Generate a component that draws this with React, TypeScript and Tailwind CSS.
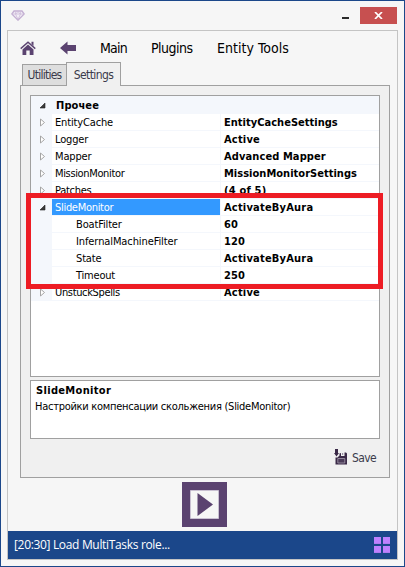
import React from 'react';

const rows = [
  { name: 'EntityCache', value: 'EntityCacheSettings', nt: 'tracking-[-0.15px]', vt: 'tracking-[0.02px]' },
  { name: 'Logger', value: 'Active', nt: 'tracking-[-0.15px]', vt: 'tracking-[0.2px]' },
  { name: 'Mapper', value: 'Advanced Mapper', nt: 'tracking-[-0.15px]', vt: 'tracking-[0.1px]' },
  { name: 'MissionMonitor', value: 'MissionMonitorSettings', nt: 'tracking-[-0.35px]', vt: 'tracking-[0.02px]' },
  { name: 'Patches', value: '(4 of 5)', nt: 'tracking-[-0.3px]', vt: 'tracking-[0.2px]' },
  { name: 'SlideMonitor', value: 'ActivateByAura', selected: true, nt: 'tracking-[-0.3px]', vt: 'tracking-[0.2px]' },
  { name: 'BoatFilter', value: '60', child: true, nt: 'tracking-[-0.15px]', vt: 'tracking-[0.2px]' },
  { name: 'InfernalMachineFilter', value: '120', child: true, nt: 'tracking-[-0.1px]', vt: 'tracking-[0.1px]' },
  { name: 'State', value: 'ActivateByAura', child: true, nt: 'tracking-[-0.15px]', vt: 'tracking-[0.2px]' },
  { name: 'Timeout', value: '250', child: true, nt: 'tracking-[-0.2px]', vt: 'tracking-[0.1px]' },
  { name: 'UnstuckSpells', value: 'Active', nt: 'tracking-[-0.35px]', vt: 'tracking-[0.2px]' },
];

function Expander({ open }: { open?: boolean }) {
  return (
    <svg className="ml-[8px] block" width="7" height="9" viewBox="0 0 7 9">
      {open ? (
        <path d="M6 2V7H1Z" fill="#3b3b3b" stroke="#222" strokeWidth=".6" />
      ) : (
        <path d="M1.5 1V8L5.5 4.5Z" fill="#fff" stroke="#a5a5a5" strokeWidth="1" />
      )}
    </svg>
  );
}

function TitleBar() {
  return (
    <div className="flex h-[29px] shrink-0 items-start pl-[10px] pr-[7px]">
      <svg className="mt-[9px]" width="14" height="11" viewBox="0 0 14 11">
        <path d="M3 1H11L13.2 4 7 10.2.8 4Z" fill="#f4eff7" stroke="#c3afd2" strokeWidth="1.3" />
        <path d="M1 4H13M4.5 4 7 9.5 9.5 4M4 1.2 4.8 4 7 1.5 9.2 4 10 1.2" fill="none" stroke="#cbbad8" strokeWidth=".8" />
      </svg>
      <div className="ml-auto mr-[11px] mt-[16px] h-[2px] w-[7px] bg-[#2b2b2b]" />
      <div className="mt-[6px] flex h-[17px] w-[37px] items-center justify-center bg-[#c75050]">
        <svg width="9" height="7" viewBox="0 0 9 7">
          <path d="M1 0 8 7M8 0 1 7" stroke="#fff" strokeWidth="1.7" />
        </svg>
      </div>
    </div>
  );
}

function MenuBar() {
  return (
    <div className="flex h-[33px] items-center text-[14px] text-black">
      <svg className="ml-[12px]" width="16" height="14" viewBox="0 0 16 14">
        <path d="M8 3.6 13.5 8.5V14H9.7V9.5H6.3V14H2.5V8.5Z" fill="#5b4370" />
        <path d="M.7 7.6 8 1.2 15.3 7.6" fill="none" stroke="#5b4370" strokeWidth="1.4" />
        <path d="M11.5 .8H13.5V5L11.5 3Z" fill="#5b4370" />
      </svg>
      <svg className="ml-[24px]" width="16" height="14" viewBox="0 0 16 14">
        <path d="M0 7 7.5 .5V4H16V10H7.5V13.5Z" fill="#5b4370" />
      </svg>
      <span className="ml-[24px] w-[51px] whitespace-nowrap pt-[2px] tracking-[-0.8px]">Main</span>
      <span className="w-[66px] whitespace-nowrap pt-[2px] tracking-[-0.5px]">Plugins</span>
      <span className="whitespace-nowrap pt-[2px] tracking-[0.02px]">Entity Tools</span>
    </div>
  );
}

function PropertyGrid() {
  return (
    <div className="h-[282px] border border-[#a0a0a0] bg-white text-[11px] leading-[17px] text-black">
      <div className="flex h-[18px] items-center bg-[#f4f7fc]">
        <div className="w-[21px]"><Expander open /></div>
        <span className="ml-[4px] font-bold tracking-[0.1px]">Прочее</span>
      </div>
      {rows.map((r) => (
        <div key={r.name} className="flex h-[17px] whitespace-nowrap">
          <div className="flex w-[21px] shrink-0 items-center bg-[#f4f7fc]">
            {!r.child && <Expander open={r.selected} />}
          </div>
          <div
            className={
              'w-[168px] shrink-0 border-b border-[#f4f7fc] ' +
              (r.child ? 'pl-[24px] ' : 'pl-[3px] ') +
              (r.selected ? 'bg-[#3399ff] text-white ' : '') + r.nt
            }
          >
            {r.name}
          </div>
          <div className={'grow border-b border-l border-[#f4f7fc] pl-[3px] font-bold ' + r.vt}>{r.value}</div>
        </div>
      ))}
    </div>
  );
}

function SaveButton() {
  return (
    <div className="flex h-[18px] items-center self-end pr-[4px] text-[#3b3b4b]">
      <svg width="14" height="16" viewBox="0 0 14 16">
        <path d="M1 0H4V4H5L2.5 7.5 0 4H1Z" fill="#3a2947" />
        <path d="M1.5 8.5H3.5L5.5 6.5V4.5L7 4V7H10.5V3.5H12L13 4.5V15.5H1.5Z" fill="#3a2947" />
        <path d="M8 4H9.2V6H8Z" fill="#9b91a5" />
        <path d="M3.8 14V9.5H10.8V14Z" fill="#4b3b58" stroke="#a79eaf" strokeWidth=".8" />
      </svg>
      <span className="ml-[4px] pt-[2px] text-[12px] tracking-[-0.6px]">Save</span>
    </div>
  );
}

export default function App() {
  return (
    <div className="relative flex h-[567px] w-[405px] flex-col overflow-hidden border border-[#1b478a] bg-[#f6f6f6] font-['DejaVu_Sans_Condensed','DejaVu_Sans',sans-serif] [font-stretch:condensed]">
      <TitleBar />
      <div className="ml-[6px] flex h-[530px] w-[391px] flex-col border border-[#c4c4c4]">
        <MenuBar />
        <div className="flex h-[21px] shrink-0 items-end pl-[14px] text-[12px] text-[#3b3b4b]">
          <div className="flex h-[21px] w-[44px] items-center justify-center border border-b-0 border-r-0 border-[#a0a0a0] bg-[#dedede] tracking-[-0.75px]">Utilities</div>
          <div className="relative z-10 -mb-px flex h-[24px] w-[55px] items-center justify-center border border-b-0 border-[#a0a0a0] bg-[#f0f0f0] tracking-[-0.6px]">Settings</div>
        </div>
        <div className="ml-[12px] flex h-[393px] w-[370px] shrink-0 flex-col border border-[#a0a0a0] bg-[#f0f0f0] px-[9px] pt-[9px]">
          <PropertyGrid />
          <div className="mb-[9px] mt-[3px] h-[59px] shrink-0 border border-[#a0a0a0] bg-white text-[11px] leading-[16px] text-black">
            <div className="pl-[5px] pt-[2px] font-bold tracking-[0.33px]">SlideMonitor</div>
            <div className="whitespace-nowrap pl-[4px] tracking-[-0.27px]">Настройки компенсации скольжения (SlideMonitor)</div>
          </div>
          <SaveButton />
        </div>
        <div className="flex h-[53px] shrink-0 items-center pl-[174px]">
          <svg width="45" height="45" viewBox="0 0 45 45">
            <path d="M0 0H45V45H0Z" fill="#5b4370" />
            <path d="M8.5 8.5H36.5V36.5H8.5Z" fill="#f6f6f6" stroke="#c9c0d2" />
            <path d="M15.5 11V34L31 22.5Z" fill="#5b4370" />
          </svg>
        </div>
        <div className="flex h-[28px] shrink-0 items-center justify-between bg-[#1b478a] pl-[6px] pr-[7px] font-['Open_Sans','Noto_Sans',sans-serif] text-[12px] text-white [font-stretch:normal]">
          <span className="whitespace-nowrap tracking-[-0.33px]">[20:30] Load MultiTasks role...</span>
          <div className="grid grid-cols-2 gap-[2px]">
            {[0, 1, 2, 3].map((i) => (
              <div key={i} className="h-[7px] w-[7px] border-b border-[#b07af0] bg-[#bf80ff]" />
            ))}
          </div>
        </div>
      </div>
      <div className="pointer-events-none absolute left-[25px] top-[192px] z-20 h-[96px] w-[357px] border-[5px] border-[#ed1c24]" />
    </div>
  );
}
